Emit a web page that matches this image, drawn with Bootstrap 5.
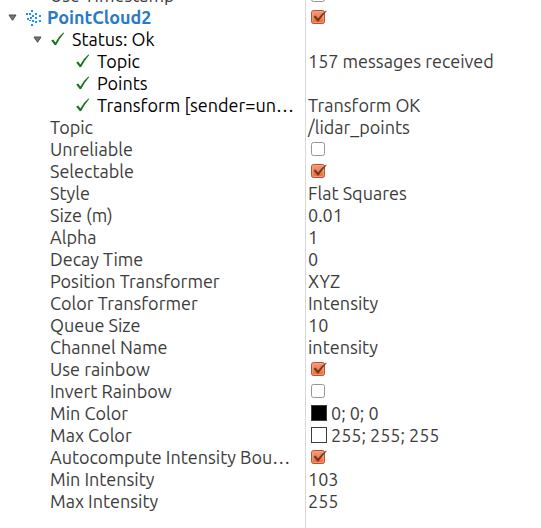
<!DOCTYPE html>
<html lang="en">
<head>
<meta charset="utf-8">
<meta name="viewport" content="width=device-width, initial-scale=1">
<title>Displays</title>
<link href="https://cdn.jsdelivr.net/npm/bootstrap@5.3.0/dist/css/bootstrap.min.css" rel="stylesheet">
<style>
  body { font-family: Ubuntu, "Noto Sans", sans-serif; font-size: 18px; line-height: 22px; color: #3c3c3c; background: #fff; }
  .tree-view { height: 100vh; }
  /* the list is scrolled so that its first row is partly out of view */
  .tree { height: calc(100vh + 16px); margin-top: -16px; table-layout: fixed; border-collapse: separate; border-spacing: 0; }
  .tree .name-col { width: 306px; }
  .tree td, .tree th { height: 22px; padding: 0; font-weight: 400; white-space: nowrap; overflow: hidden; vertical-align: top; }
  .tree th { border-right: 1px solid #d8d8d8; padding-left: 50px; }
  .tree td { padding-left: 2px; }
  .tree .lv0 { padding-left: 6px; }
  .tree .lv1 { padding-left: 31px; }
  .tree .lv2 { padding-left: 75px; }
  .tree .line { display: flex; align-items: center; height: 22px; }
  .status { color: #000; }
  .display-name { color: #2a7ac8; font-weight: 700; }
  .toggle { width: 13px; height: 22px; padding: 0; border: 0; background: none; display: flex; align-items: center; justify-content: center; }
  .toggle svg, .line svg { display: block; flex: none; }
  .ok-icon { margin-right: 6px; }
  .toggle + .ok-icon { margin-left: 6px; }
  .cloud-icon { margin: 0 6px 0 4px; }
  .tick { appearance: none; display: block; width: 16px; height: 16px; margin: 3px 0 3px 3px;
    background: url("data:image/svg+xml,%3Csvg xmlns='http://www.w3.org/2000/svg' width='16' height='16'%3E%3Crect x='.5' y='1.5' width='13' height='13' rx='2' fill='%23fff' stroke='%239a9690'/%3E%3C/svg%3E") no-repeat; }
  .tick:checked { background-image: url("data:image/svg+xml,%3Csvg xmlns='http://www.w3.org/2000/svg' width='16' height='16'%3E%3Cdefs%3E%3ClinearGradient id='g' x2='0' y2='1'%3E%3Cstop stop-color='%23f59a78'/%3E%3Cstop offset='1' stop-color='%23ee6a3c'/%3E%3C/linearGradient%3E%3C/defs%3E%3Crect x='.5' y='1.5' width='13' height='13' rx='2' fill='url(%23g)' stroke='%23b9532f'/%3E%3Crect x='1.5' y='2.5' width='11' height='11' rx='1' fill='none' stroke='%23f8ab8c' stroke-opacity='.6'/%3E%3Cpath d='M2.6 7.4L4.6 6.6L7 9.6Q10.5 4.6 15.4 1.6L15.6 2.2Q11 6.6 7.6 12.6L6.4 12.6Z' fill='%236b3a26'/%3E%3C/svg%3E"); }
  .swatch { width: 16px; height: 16px; border: 1px solid #3c3c3c; margin: 0 4px 0 3px; }
</style>
<script src="https://cdn.jsdelivr.net/npm/bootstrap@5.3.0/dist/js/bootstrap.bundle.min.js"></script>
</head>
<body>
<svg class="d-none" aria-hidden="true">
  <symbol id="ok" viewBox="0 0 16 16"><path d="M1.2 9.6L3.2 8.4L5.4 11.4Q8.6 5.6 13.4 1.6L14.2 2Q9.6 7.4 6.2 14L4.8 14.2Z" fill="#1a731e"/></symbol>
  <symbol id="open" viewBox="0 0 9 7"><path d="M1 1H8L4.5 6.3Z" fill="#777" stroke="#4c4c4c"/></symbol>
</svg>
<main class="tree-view overflow-hidden">
<table class="tree w-100">
  <colgroup><col class="name-col"><col></colgroup>
  <tbody>
  <tr><th scope="row"><label for="stamp">Use Timestamp</label></th><td><input class="tick" type="checkbox" id="stamp"></td></tr>
  <tr><th scope="row" class="lv0"><div class="line"><button class="toggle" type="button" aria-label="Collapse PointCloud2"><svg width="9" height="7"><use href="#open"/></svg></button>
    <svg class="cloud-icon" width="18" height="18" viewBox="0 0 18 18" fill="#1e90ff" shape-rendering="crispEdges" aria-hidden="true"><path d="M8 2h2v2H8zM3 5h2v2H3zM6 5h2v2H6zM12 5h2v2h-2zM9 7h2v2H9zM16 7h2v2h-2zM4 10h2v2H4zM7 9h2v2H7zM12 9h2v2h-2zM6 12h2v1H6zM12 13h2v2h-2zM16 12h2v2h-2zM9 12h2v2H9zM8 16h2v2H8z"/></svg>
    <label class="display-name" for="cloud">PointCloud2</label></div></th><td><input class="tick" type="checkbox" id="cloud" checked></td></tr>
  <tr class="status"><th scope="row" class="lv1"><div class="line"><button class="toggle" type="button" aria-label="Collapse Status"><svg width="9" height="7"><use href="#open"/></svg></button><svg class="ok-icon" width="16" height="16" aria-hidden="true"><use href="#ok"/></svg>Status: Ok</div></th><td></td></tr>
  <tr><th scope="row" class="lv2 status"><div class="line"><svg class="ok-icon" width="16" height="16" aria-hidden="true"><use href="#ok"/></svg>Topic</div></th><td>157 messages received</td></tr>
  <tr><th scope="row" class="lv2 status"><div class="line"><svg class="ok-icon" width="16" height="16" aria-hidden="true"><use href="#ok"/></svg>Points</div></th><td></td></tr>
  <tr><th scope="row" class="lv2 status"><div class="line"><svg class="ok-icon" width="16" height="16" aria-hidden="true"><use href="#ok"/></svg>Transform [sender=un…</div></th><td>Transform OK</td></tr>
  <tr><th scope="row">Topic</th><td>/lidar_points</td></tr>
  <tr><th scope="row"><label for="unrel">Unreliable</label></th><td><input class="tick" type="checkbox" id="unrel"></td></tr>
  <tr><th scope="row"><label for="sel">Selectable</label></th><td><input class="tick" type="checkbox" id="sel" checked></td></tr>
  <tr><th scope="row">Style</th><td>Flat Squares</td></tr>
  <tr><th scope="row">Size (m)</th><td>0.01</td></tr>
  <tr><th scope="row">Alpha</th><td>1</td></tr>
  <tr><th scope="row">Decay Time</th><td>0</td></tr>
  <tr><th scope="row">Position Transformer</th><td>XYZ</td></tr>
  <tr><th scope="row">Color Transformer</th><td>Intensity</td></tr>
  <tr><th scope="row">Queue Size</th><td>10</td></tr>
  <tr><th scope="row">Channel Name</th><td>intensity</td></tr>
  <tr><th scope="row"><label for="rain">Use rainbow</label></th><td><input class="tick" type="checkbox" id="rain" checked></td></tr>
  <tr><th scope="row"><label for="inv">Invert Rainbow</label></th><td><input class="tick" type="checkbox" id="inv"></td></tr>
  <tr><th scope="row">Min Color</th><td><div class="line"><span class="swatch bg-black"></span>0; 0; 0</div></td></tr>
  <tr><th scope="row">Max Color</th><td><div class="line"><span class="swatch bg-white"></span>255; 255; 255</div></td></tr>
  <tr><th scope="row"><label for="auto">Autocompute Intensity Bou…</label></th><td><input class="tick" type="checkbox" id="auto" checked></td></tr>
  <tr><th scope="row">Min Intensity</th><td>103</td></tr>
  <tr><th scope="row">Max Intensity</th><td>255</td></tr>
  <tr class="h-100"><th></th><td></td></tr>
  </tbody>
</table>
</main>
</body>
</html>
